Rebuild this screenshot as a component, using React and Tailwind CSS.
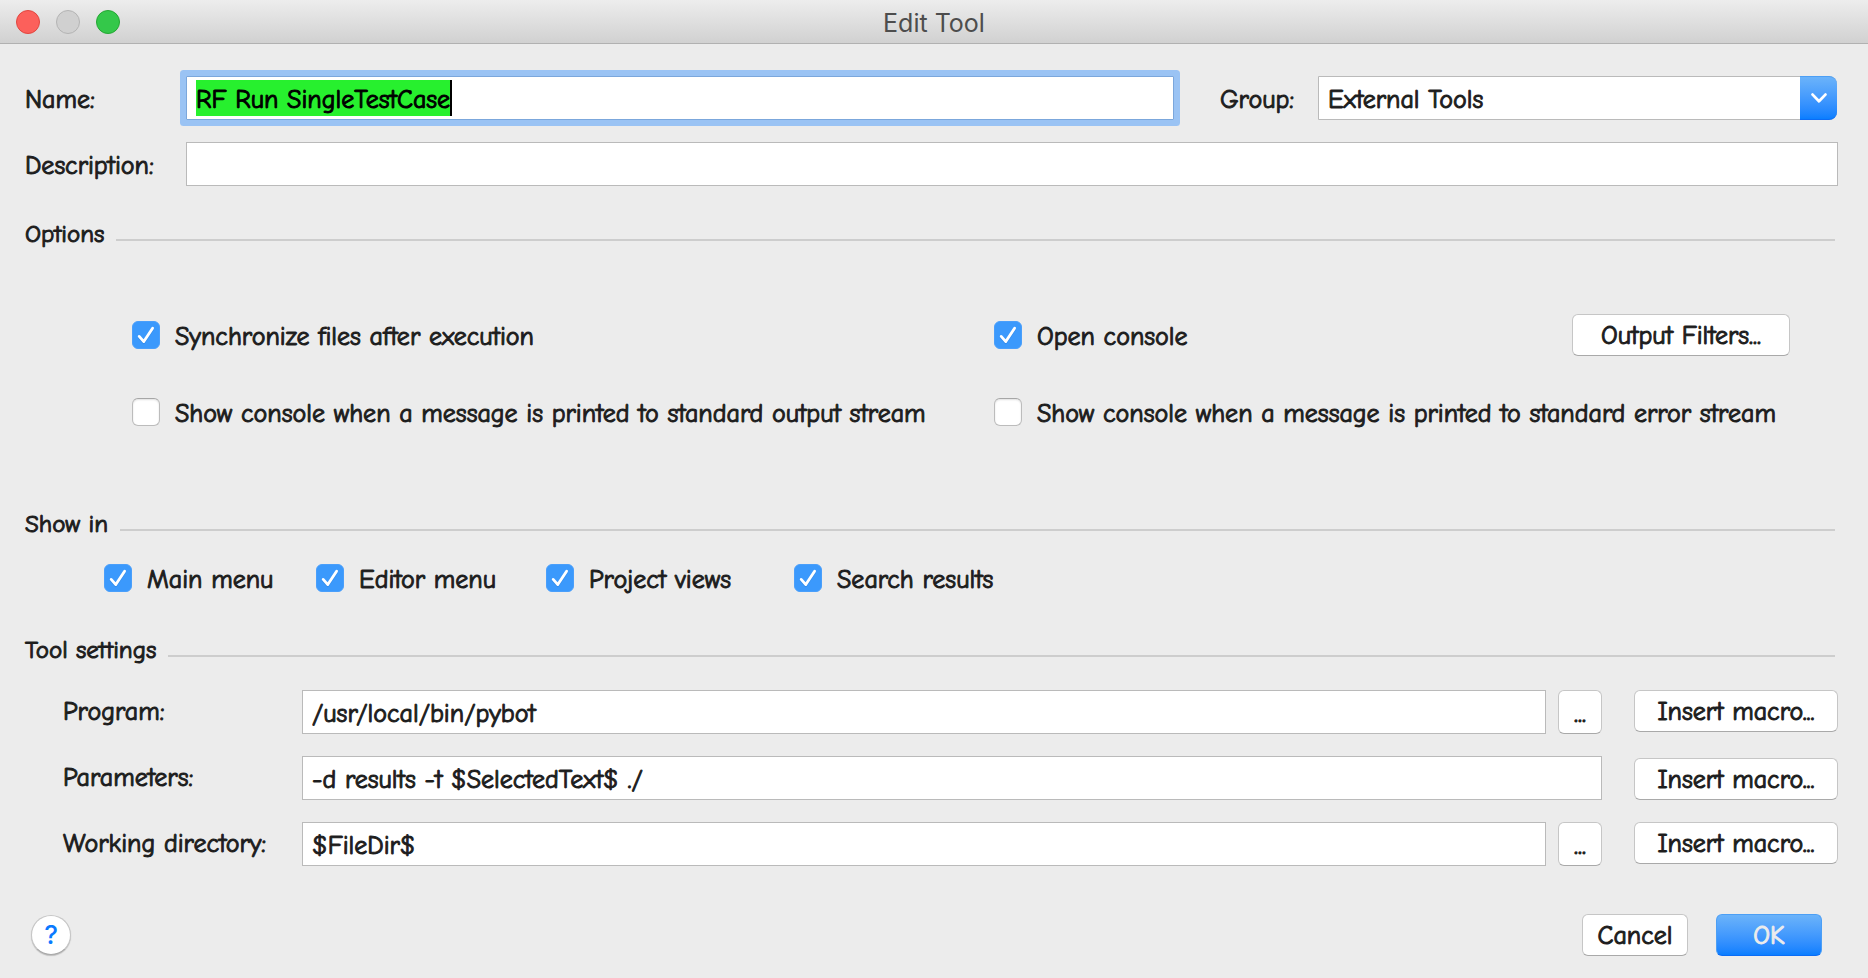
import React from "react";

const BUTTON =
  "h-[42px] rounded-md border border-[#c6c6c6] border-b-[#a9a9a9] bg-white pt-0.5 text-center leading-8";
const FIELD =
  "h-11 w-full min-w-0 border border-[#bababa] bg-white px-[9px] pt-[3px] outline-none";

function CheckBox({ id, label, defaultChecked = false }) {
  return (
    <div className="flex items-center gap-[15px]">
      <span className="grid size-7 shrink-0">
        <input
          id={id}
          type="checkbox"
          defaultChecked={defaultChecked}
          className="peer col-start-1 row-start-1 size-7 appearance-none rounded-md border border-[#bcbcbc] border-t-[#a6a6a6] bg-white shadow-[inset_0_1px_2px_#e0e0e0] checked:border-[#4a9ffb] checked:bg-[#3b99fc] checked:shadow-none"
        />
        <svg
          viewBox="0 0 28 28"
          aria-hidden="true"
          className="pointer-events-none invisible col-start-1 row-start-1 size-7 peer-checked:visible"
          fill="none"
          strokeLinecap="round"
          strokeLinejoin="round"
        >
          <path d="M7.2 16.6 L11.8 21.8 L20.6 8.6" stroke="#2b7fdc" strokeOpacity=".5" strokeWidth="2.6" />
          <path d="M7.2 15.4 L11.8 20.6 L20.6 7.2" stroke="#fff" strokeWidth="2.8" />
        </svg>
      </span>
      <label htmlFor={id} className="pt-[3px] whitespace-nowrap">
        {label}
      </label>
    </div>
  );
}

function SectionTitle({ children }) {
  return (
    <div className="mr-[3px] flex h-8 items-center gap-3">
      <h2 className="text-[25px] leading-8 whitespace-nowrap">{children}</h2>
      <span className="mt-3 h-0.5 flex-1 bg-[#cdcdcd]" />
    </div>
  );
}

function ToolRow({ id, label, value, browse = false, buttonClass = "" }) {
  return (
    <div className="flex items-center">
      <label htmlFor={id} className="w-[239px] shrink-0 whitespace-nowrap">
        {label}
      </label>
      <div className="flex min-w-0 flex-1 gap-3">
        <input id={id} type="text" defaultValue={value} className={FIELD} />
        {browse && (
          <button
            type="button"
            aria-label={`Browse ${label}`}
            className="h-11 w-11 shrink-0 rounded-md border border-[#c6c6c6] border-b-[#a9a9a9] bg-white pt-1 leading-8"
          >
            ...
          </button>
        )}
      </div>
      <button type="button" className={`${BUTTON} ml-8 w-[204px] shrink-0 ${buttonClass}`}>
        Insert macro...
      </button>
    </div>
  );
}

export default function App() {
  return (
    <div className="min-h-screen bg-[#ececec] font-['Comic_Sans_MS','Comic_Neue','Liberation_Sans',sans-serif] text-[26px] leading-8 text-[#1d1d1d] [-webkit-text-stroke-width:1px]">
      <header className="grid h-11 grid-cols-[1fr_auto_1fr] items-center border-b border-[#b1b1b1] bg-linear-to-b from-[#ededed] to-[#d1d1d1] px-4">
        <div className="flex gap-4">
          <button type="button" aria-label="Close" className="size-6 rounded-full border border-[#e2463f] bg-[#fc605b]" />
          <button type="button" aria-label="Minimize" className="size-6 rounded-full border border-[#b4b4b4] bg-[#d0d0d0]" />
          <button type="button" aria-label="Zoom" className="size-6 rounded-full border border-[#24a733] bg-[#34c84a]" />
        </div>
        <h1 className="pt-0.5 font-[Inter,sans-serif] text-[25px] text-[#4d4d4d] [-webkit-text-stroke-width:0]">Edit Tool</h1>
      </header>

      <form className="pt-8 pr-[30px] pl-[25px]" onSubmit={(e) => e.preventDefault()}>
        <div className="grid grid-cols-[161px_1fr] items-center gap-y-[22px]">
          <label htmlFor="name" className="pt-[3px]">Name:</label>
          <div className="flex items-center">
            <div className="flex h-11 flex-1 items-center rounded-[1px] border border-[#7ba7dc] bg-white pl-[9px] ring-6 ring-[#9ac3f4]">
              <input
                id="name"
                type="text"
                defaultValue="RF Run SingleTestCase"
                className="field-sizing-content h-9 border-r-2 border-black bg-[#27f02e] pt-[3px] text-black outline-none"
              />
            </div>
            <label htmlFor="group" className="ml-[46px] w-[98px] pt-[3px]">
              Group:
            </label>
            <div className="mr-px grid h-11 w-[519px]">
              <select
                id="group"
                defaultValue="External Tools"
                className="col-start-1 row-start-1 appearance-none rounded-r-lg border border-[#bababa] bg-white px-[9px] pt-[3px] outline-none"
              >
                <option>External Tools</option>
              </select>
              <span className="pointer-events-none col-start-1 row-start-1 flex w-[37px] items-center justify-center justify-self-end rounded-r-lg border-y border-t-[#4c9ff5] border-b-[#0b6cf5] bg-linear-to-b from-[#6bb3fa] to-[#087eff]">
                <svg viewBox="0 0 16 10" aria-hidden="true" className="h-2.5 w-4" fill="none" stroke="#fff" strokeWidth="2.8" strokeLinecap="round" strokeLinejoin="round">
                  <path d="M1.6 1.6 L8 8.2 L14.4 1.6" />
                </svg>
              </span>
            </div>
          </div>
          <label htmlFor="description" className="pt-[3px]">Description:</label>
          <input id="description" type="text" className={FIELD} />
        </div>

        <section className="mt-8">
          <SectionTitle>Options</SectionTitle>
          <div className="grid grid-cols-2 gap-x-[18px] gap-y-[35px] pt-16 pl-[107px]">
            <CheckBox id="sync" label="Synchronize files after execution" defaultChecked />
            <div className="flex items-center justify-between pr-12">
              <CheckBox id="open-console" label="Open console" defaultChecked />
              <button type="button" className={`${BUTTON} w-[218px]`}>
                Output Filters...
              </button>
            </div>
            <div className="flex h-[42px] items-center">
              <CheckBox id="stdout" label="Show console when a message is printed to standard output stream" />
            </div>
            <div className="flex h-[42px] items-center">
              <CheckBox id="stderr" label="Show console when a message is printed to standard error stream" />
            </div>
          </div>
        </section>

        <section className="mt-[75px]">
          <SectionTitle>Show in</SectionTitle>
          <div className="grid h-[76px] grid-cols-[212px_230px_248px_auto] items-center pl-[79px]">
            <CheckBox id="main-menu" label="Main menu" defaultChecked />
            <CheckBox id="editor-menu" label="Editor menu" defaultChecked />
            <CheckBox id="project-views" label="Project views" defaultChecked />
            <CheckBox id="search-results" label="Search results" defaultChecked />
          </div>
        </section>

        <section className="mt-[18px]">
          <SectionTitle>Tool settings</SectionTitle>
          <div className="flex flex-col gap-[22px] pt-6 pl-[38px]">
            <ToolRow id="program" label="Program:" value="/usr/local/bin/pybot" browse buttonClass="self-start" />
            <ToolRow id="parameters" label="Parameters:" value="-d results -t $SelectedText$ ./" buttonClass="self-end" />
            <ToolRow id="directory" label="Working directory:" value="$FileDir$" browse buttonClass="self-start" />
          </div>
        </section>

        <footer className="mt-12 flex items-center justify-between pr-4 pb-[22px] pl-1.5">
          <button
            type="button"
            aria-label="Help"
            className="size-10 rounded-full border border-[#c6c6c6] border-b-[#a9a9a9] bg-white font-[Inter,sans-serif] font-medium text-[#0a7aff] shadow-[0_1px_1px_#bdbdbd] [-webkit-text-stroke-width:0]"
          >
            ?
          </button>
          <div className="flex gap-7">
            <button type="button" className={`${BUTTON} w-[106px]`}>
              Cancel
            </button>
            <button
              type="submit"
              className="h-[42px] w-[106px] rounded-md border border-[#4c9ff5] border-b-[#0b6cf5] bg-linear-to-b from-[#6bb3fa] to-[#087eff] pt-0.5 text-[#ececec]"
            >
              OK
            </button>
          </div>
        </footer>
      </form>
    </div>
  );
}
